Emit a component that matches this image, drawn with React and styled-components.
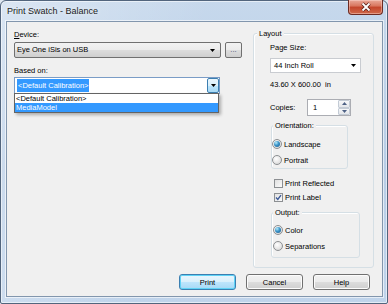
import styled, { createGlobalStyle } from "styled-components";

const GlobalStyle = createGlobalStyle`
  * { box-sizing: border-box; }
  html, body { margin: 0; padding: 0; }
  body {
    width: 388px;
    height: 304px;
    overflow: hidden;
    background: #dfe7f0;
    font-family: "Liberation Sans", Arial, sans-serif;
    font-size: 7.5px;
    color: #000;
  }
`;

const Window = styled.div`
  width: 388px;
  height: 304px;
  display: flex;
  flex-direction: column;
  padding: 0 4px 6px 5px;
  border: 1px solid #52657d;
  border-radius: 6px 6px 2px 2px;
  background:
    linear-gradient(105deg, rgba(255, 255, 255, 0.35) 0%, rgba(255, 255, 255, 0) 45%),
    linear-gradient(180deg, #c6d8ec 0%, #b8cde6 55%, #c0d4eb 100%);
  box-shadow: inset 0 0 0 1px rgba(255, 255, 255, 0.55);
`;

const TitleBar = styled.div`
  height: 20px;
  display: flex;
  align-items: flex-start;
`;

const Title = styled.div`
  font-size: 9px;
  line-height: 20px;
  padding-left: 1px;
  color: #1b1b1b;
  text-shadow: 0 0 5px rgba(255, 255, 255, 0.95);
`;

const CloseButton = styled.div`
  margin-left: auto;
  margin-top: -1px;
  width: 35px;
  height: 15px;
  border: 1px solid #6d2b22;
  border-top: none;
  border-radius: 0 0 4px 4px;
  background: linear-gradient(180deg, #e9a999 0%, #d9775f 42%, #c4462c 52%, #cf6a4b 100%);
  box-shadow: inset 0 0 0 1px rgba(255, 220, 210, 0.45);
  display: flex;
  align-items: center;
  justify-content: center;
`;

const Client = styled.div`
  flex: 1;
  display: flex;
  flex-direction: column;
  background: #f0f0f0;
  border: 1px solid #8296ad;
  box-shadow: 0 0 0 1px rgba(255, 255, 255, 0.6);
`;

const Main = styled.div`
  display: flex;
  align-items: flex-start;
  padding-left: 7px;
`;

const LeftCol = styled.div`
  width: 228px;
  display: flex;
  flex-direction: column;
  padding-top: 8px;
`;

const Label = styled.div`
  line-height: 10px;
  margin-top: ${(p) => p.$mt || 0}px;
  white-space: nowrap;
`;

const Row = styled.div`
  display: flex;
  align-items: center;
  gap: ${(p) => p.$gap || 0}px;
  margin-top: ${(p) => p.$mt || 0}px;
`;

const DropList = styled.div`
  width: 207px;
  height: 16px;
  display: flex;
  align-items: center;
  padding: 0 5px 0 2px;
  border: 1px solid #707070;
  border-radius: 2px;
  background: linear-gradient(180deg, #f2f2f2 0%, #ebebeb 50%, #dddddd 50%, #cfcfcf 100%);
  line-height: 14px;
`;

const SmallButton = styled.div`
  width: 17px;
  height: 16px;
  border: 1px solid #707070;
  border-radius: 2px;
  background: linear-gradient(180deg, #f2f2f2 0%, #ebebeb 50%, #dddddd 50%, #cfcfcf 100%);
  display: flex;
  align-items: center;
  justify-content: center;
  line-height: 10px;
  color: #3b3b6b;
`;

const Caret = styled.svg`
  margin-left: auto;
  flex-shrink: 0;
`;

const Combo = styled.div`
  position: relative;
  width: 206px;
  height: 17px;
  margin-top: 1px;
  display: flex;
  align-items: center;
  border: 1px solid #7a9cc6;
  background: #fff;
`;

const Selected = styled.span`
  margin-left: 2px;
  padding: 0 1px;
  line-height: 13px;
  background: #3399ff;
  color: #fff;
`;

const ComboButton = styled.div`
  margin-left: auto;
  width: 12px;
  height: 15px;
  border: 1px solid #3c7fb1;
  border-radius: 2px;
  background: linear-gradient(180deg, #eaf6fd 0%, #d9f0fc 50%, #bee6fd 50%, #a7d9f5 100%);
  display: flex;
  align-items: center;
  justify-content: center;

  ${Caret} {
    margin-left: 0;
  }
`;

const Popup = styled.div`
  position: absolute;
  top: 100%;
  left: -1px;
  width: 205px;
  border: 1px solid #646464;
  background: #fff;
  box-shadow: 2px 2px 3px rgba(0, 0, 0, 0.28);
  z-index: 2;
`;

const PopupItem = styled.div`
  line-height: 9px;
  padding-left: 1px;
  background: ${(p) => (p.$active ? "#3399ff" : "transparent")};
  color: ${(p) => (p.$active ? "#fff" : "#000")};
`;

const Group = styled.div`
  width: ${(p) => p.$w}px;
  height: ${(p) => p.$h}px;
  margin: ${(p) => p.$m || "0"};
  border: 1px solid #d5dfe5;
  border-radius: 3px;
  box-shadow: inset 1px 1px 0 #fff;
`;

const GroupTitle = styled.div`
  display: table;
  margin: -5px 0 0 ${(p) => p.$ml || 1}px;
  padding: 0 2px;
  line-height: 10px;
  background: #f0f0f0;
`;

const GroupBody = styled.div`
  display: flex;
  flex-direction: column;
  align-items: flex-start;
  padding: ${(p) => p.$pad || "0"};
`;

const PageSelect = styled.div`
  width: 91px;
  height: 15px;
  margin-top: 5px;
  display: flex;
  align-items: center;
  padding: 0 4px 0 3px;
  border: 1px solid #c9ccd1;
  background: #fff;
`;

const SpinBox = styled.div`
  width: 44px;
  height: 17px;
  display: flex;
  border: 1px solid #abadb3;
  background: #fff;
`;

const SpinValue = styled.div`
  padding-left: 5px;
  line-height: 15px;
`;

const SpinButtons = styled.div`
  margin-left: auto;
  width: 12px;
  display: flex;
  flex-direction: column;
`;

const SpinHalf = styled.div`
  flex: 1;
  display: flex;
  align-items: center;
  justify-content: center;
  border: 1px solid #c3cbd5;
  border-radius: 1px;
  background: linear-gradient(180deg, #f6f7f9 0%, #e3e6ea 100%);
`;

const Option = styled.div`
  height: ${(p) => p.$h || 16}px;
  display: flex;
  align-items: center;
  gap: 2px;
  white-space: nowrap;
`;

const Radio = styled.span`
  width: 10px;
  height: 10px;
  border-radius: 50%;
  border: 1px solid #8c8f92;
  background: radial-gradient(circle at 40% 35%, #ffffff 0%, #e6e6e6 55%, #cfcfcf 100%);
  display: flex;
  align-items: center;
  justify-content: center;
  flex-shrink: 0;

  &::after {
    content: "";
    width: 6px;
    height: 6px;
    border-radius: 50%;
    display: ${(p) => (p.$checked ? "block" : "none")};
    background: radial-gradient(circle at 35% 30%, #b5ecfb 0%, #3a93c8 45%, #1c5a8c 100%);
  }
`;

const Check = styled.span`
  width: 9px;
  height: 9px;
  border: 1px solid #8c8f92;
  background: linear-gradient(135deg, #e0e0e0 0%, #fbfbfb 100%);
  display: flex;
  align-items: center;
  justify-content: center;
  flex-shrink: 0;
`;

const CheckList = styled.div`
  display: flex;
  flex-direction: column;
  margin: 7px 0 0 4px;
`;

const ButtonRow = styled.div`
  display: flex;
  justify-content: flex-end;
  gap: 10px;
  padding-right: 12px;
  margin-top: 6px;
`;

const Button = styled.div`
  width: 57px;
  height: 16px;
  display: flex;
  align-items: center;
  justify-content: center;
  border: 1px solid ${(p) => (p.$default ? "#3c7fb1" : "#707070")};
  border-radius: 3px;
  background: ${(p) =>
    p.$default
      ? "linear-gradient(180deg, #eaf6fd 0%, #d9f0fc 50%, #bee6fd 50%, #a7d9f5 100%)"
      : "linear-gradient(180deg, #f2f2f2 0%, #ebebeb 50%, #dddddd 50%, #cfcfcf 100%)"};
  box-shadow: ${(p) => (p.$default ? "inset 0 0 0 1px #5fd3f6" : "inset 0 0 0 1px #fcfcfc")};
`;

const Arrow = ({ color = "#000" }) => (
  <Caret width="5" height="3" viewBox="0 0 5 3">
    <polygon points="0,0 5,0 2.5,3" fill={color} />
  </Caret>
);

const SpinArrow = ({ up }) => (
  <svg width="5" height="3" viewBox="0 0 5 3">
    <polygon points={up ? "0,3 5,3 2.5,0" : "0,0 5,0 2.5,3"} fill="#4d6185" />
  </svg>
);

const Tick = () => (
  <svg width="7" height="7" viewBox="0 0 7 7">
    <path d="M1 3.6 L2.8 5.4 L6 1.2" fill="none" stroke="#3d5a98" strokeWidth="1.4" />
  </svg>
);

export default function App() {
  return (
    <>
      <GlobalStyle />
      <Window>
        <TitleBar>
          <Title>Print Swatch - Balance</Title>
          <CloseButton>
            <svg width="12" height="10" viewBox="0 0 12 10">
              <path d="M2.5 1.5 L9.5 8.5 M9.5 1.5 L2.5 8.5" stroke="#5a2219" strokeWidth="3.4" />
              <path d="M2.5 1.5 L9.5 8.5 M9.5 1.5 L2.5 8.5" stroke="#fff" strokeWidth="1.8" />
            </svg>
          </CloseButton>
        </TitleBar>

        <Client>
          <Main>
            <LeftCol>
              <Label>
                <u>D</u>evice:
              </Label>
              <Row $gap={4} $mt={2}>
                <DropList>
                  Eye One iSis on USB
                  <Arrow />
                </DropList>
                <SmallButton>...</SmallButton>
              </Row>

              <Label $mt={8}>Based on:</Label>
              <Combo>
                <Selected>&lt;Default Calibration&gt;</Selected>
                <ComboButton>
                  <Arrow />
                </ComboButton>
                <Popup>
                  <PopupItem>&lt;Default Calibration&gt;</PopupItem>
                  <PopupItem $active>MediaModel</PopupItem>
                </Popup>
              </Combo>
            </LeftCol>

            <Group $w={121} $h={235} $m="11px 0 0 11px">
              <GroupTitle $ml={3}>Layout</GroupTitle>
              <GroupBody $pad="0 0 0 16px">
                <Label $mt={4}>Page Size:</Label>
                <PageSelect>
                  44 Inch Roll
                  <Arrow />
                </PageSelect>
                <Label $mt={7}>43.60 X 600.00&nbsp;&nbsp;in</Label>

                <Row $mt={9}>
                  <Label style={{ width: 37 }}>Copies:</Label>
                  <SpinBox>
                    <SpinValue>1</SpinValue>
                    <SpinButtons>
                      <SpinHalf>
                        <SpinArrow up />
                      </SpinHalf>
                      <SpinHalf>
                        <SpinArrow />
                      </SpinHalf>
                    </SpinButtons>
                  </SpinBox>
                </Row>

                <Group $w={77} $h={44} $m="9px 0 0 1px">
                  <GroupTitle>Orientation:</GroupTitle>
                  <GroupBody $pad="5px 0 0 0">
                    <Option>
                      <Radio $checked />
                      Landscape
                    </Option>
                    <Option>
                      <Radio />
                      Portrait
                    </Option>
                  </GroupBody>
                </Group>

                <CheckList>
                  <Option $h={14}>
                    <Check />
                    Print Reflected
                  </Option>
                  <Option $h={14}>
                    <Check>
                      <Tick />
                    </Check>
                    Print Label
                  </Option>
                </CheckList>

                <Group $w={89} $h={46} $m="8px 0 0 1px">
                  <GroupTitle>Output:</GroupTitle>
                  <GroupBody $pad="4px 0 0 1px">
                    <Option>
                      <Radio $checked />
                      Color
                    </Option>
                    <Option>
                      <Radio />
                      Separations
                    </Option>
                  </GroupBody>
                </Group>
              </GroupBody>
            </Group>
          </Main>

          <ButtonRow>
            <Button $default>Print</Button>
            <Button>Cancel</Button>
            <Button>Help</Button>
          </ButtonRow>
        </Client>
      </Window>
    </>
  );
}
